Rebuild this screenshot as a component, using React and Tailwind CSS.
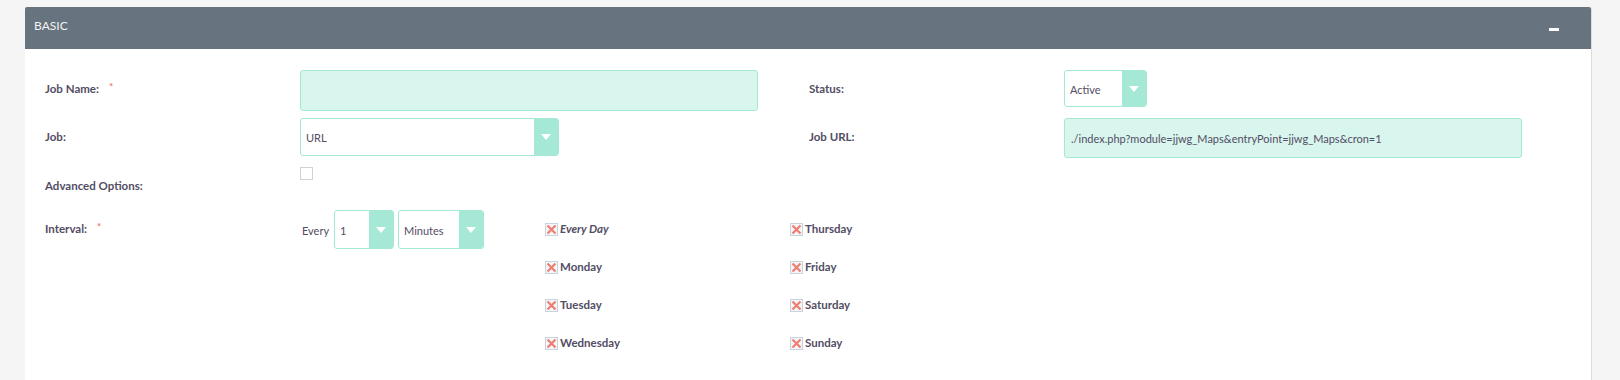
import React from "react";

const font = { fontFamily: "Lato, 'Open Sans', sans-serif" };

const Label = ({ children, required }) => (
  <div className="w-[255px] shrink-0 pt-[11px] leading-[15px] text-[11.5px] font-bold text-[#534d64] flex items-start">
    <span>{children}</span>
    {required && <span className="ml-[10px] -mt-[2px] text-[10px] text-[#f0787a]">*</span>}
  </div>
);

const Caret = () => (
  <svg width="10" height="6" viewBox="0 0 10 6">
    <path d="M0 0 L10 0 L5 6 Z" fill="#ffffff" />
  </svg>
);

const Select = ({ value, width, height }) => (
  <div
    className="flex border border-[#a5e8d6] rounded-[3px] bg-white overflow-hidden shrink-0"
    style={{ width, height }}
  >
    <div className="flex-1 flex items-center pl-[5px] pt-[3px] text-[11px] text-[#534d64]">{value}</div>
    <div className="w-[24px] bg-[#a5e8d6] flex items-center justify-center">
      <Caret />
    </div>
  </div>
);

const XBox = () => (
  <span className="w-[13px] h-[13px] border border-[#c9d3de] bg-[#f4f6f8] flex items-center justify-center shrink-0">
    <svg width="11" height="11" viewBox="0 0 11 11">
      <path d="M1.5 1.5 L9.5 9.5 M9.5 1.5 L1.5 9.5" stroke="#f07d72" strokeWidth="2.2" />
    </svg>
  </span>
);

const Day = ({ name, italic }) => (
  <div className="h-[38px] flex items-center gap-[2px]">
    <XBox />
    <span className={`text-[11.5px] font-bold text-[#534d64] -mt-[1px] ${italic ? "italic" : ""}`}>{name}</span>
  </div>
);

export default function App() {
  return (
    <div className="min-h-screen bg-[#f5f5f5] pl-[25px] pr-[28px] pt-[7px]" style={font}>
      <div className="bg-white border-r border-[#dcdcdc] rounded-t-[2px] min-h-[380px]">
        {/* header */}
        <div className="h-[42px] bg-[#67737e] rounded-t-[2px] flex items-center justify-between pl-[9px] pr-[32px]">
          <span className="text-[12px] text-[#f2f2f2] -mt-[4px]">BASIC</span>
          <span className="w-[10px] h-[3px] bg-white mt-[2px]" />
        </div>

        {/* body */}
        <div className="pl-[20px] pt-[21px]">
          <div className="flex h-[41px]">
            <div className="w-[764px] flex">
              <Label required>Job Name:</Label>
              <div className="w-[458px] h-[41px] bg-[#d8f5ee] border border-[#a5e8d6] rounded-[3px]" />
            </div>
            <div className="w-[764px] flex">
              <Label>Status:</Label>
              <Select value="Active" width={83} height={37} />
            </div>
          </div>

          <div className="flex h-[40px] mt-[7px]">
            <div className="w-[764px] flex">
              <Label>Job:</Label>
              <Select value="URL" width={259} height={38} />
            </div>
            <div className="w-[764px] flex">
              <Label>Job URL:</Label>
              <div className="w-[458px] h-[40px] bg-[#d8f5ee] border border-[#a5e8d6] rounded-[3px] flex items-center pl-[6px] pt-[2px] text-[11px] text-[#534d64]">
                ./index.php?module=jjwg_Maps&amp;entryPoint=jjwg_Maps&amp;cron=1
              </div>
            </div>
          </div>

          <div className="flex h-[26px] mt-[9px]">
            <div className="w-[764px] flex">
              <Label>Advanced Options:</Label>
              <span className="w-[13px] h-[13px] border border-[#cdd3db] bg-white" />
            </div>
          </div>

          <div className="flex mt-[17px]">
            <Label required>Interval:</Label>
            <div className="flex items-start">
              <div className="flex items-center h-[39px]">
                <span className="w-[34px] shrink-0 text-[11px] text-[#534d64] pl-[2px] mt-[3px]">Every</span>
                <Select value="1" width={60} height={39} />
                <span className="w-[4px]" />
                <Select value="Minutes" width={86} height={39} />
              </div>
              <div className="ml-[61px] w-[245px]">
                <Day name="Every Day" italic />
                <Day name="Monday" />
                <Day name="Tuesday" />
                <Day name="Wednesday" />
              </div>
              <div>
                <Day name="Thursday" />
                <Day name="Friday" />
                <Day name="Saturday" />
                <Day name="Sunday" />
              </div>
            </div>
          </div>
        </div>
      </div>
    </div>
  );
}
